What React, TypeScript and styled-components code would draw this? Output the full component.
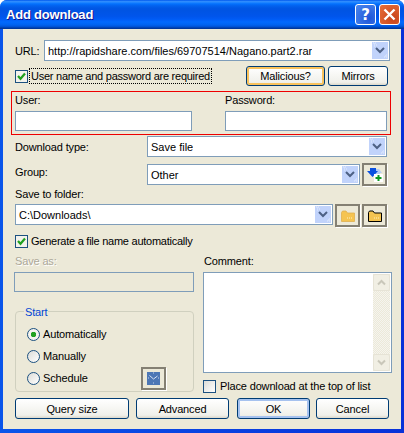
import styled, { createGlobalStyle } from 'styled-components';

const GlobalStyle = createGlobalStyle`
  html, body { margin: 0; padding: 0; background: #fff; }
  * { box-sizing: border-box; }
`;

function Chevron() {
  return (
    <svg width="16" height="17" viewBox="0 0 16 17">
      <path d="M4 6 L8 10 L12 6" fill="none" stroke="#4d6185" strokeWidth="2" />
      <path d="M1 1h1M3 1h1M2 2h1M2 4h1M4 3h1M14 13h1M12 15h1M14 15h1M13 14h1" stroke="#e6eefc" strokeWidth="1" />
    </svg>
  );
}

function Combo({ width, value }: { width: number; value: string }) {
  return (
    <ComboBox $width={width}>
      <ComboText>{value}</ComboText>
      <ComboArrow><Chevron /></ComboArrow>
    </ComboBox>
  );
}

function Check({ checked }: { checked?: boolean }) {
  return (
    <CheckBox $checked={checked}>
      {checked && (
        <svg width="9" height="9" viewBox="0 0 9 9">
          <path d="M1 4 L3.5 6.8 L8 1.5" fill="none" stroke="#21a121" strokeWidth="2.2" />
        </svg>
      )}
    </CheckBox>
  );
}

function FolderIcon({ outlined }: { outlined?: boolean }) {
  return (
    <svg width="14" height="12" viewBox="0 0 14 12">
      <path
        d="M.5 2.5 L1.5 1 H5 L6.5 3 H13.5 V11.5 H.5 Z"
        fill="#f5c451"
        stroke={outlined ? '#000' : '#e0b050'}
        strokeWidth={outlined ? 1 : 0.8}
      />
      <path d="M6 8h1M8 8h1M10 8h1" stroke="#fff2c0" strokeWidth="1" />
    </svg>
  );
}

function AddIcon() {
  return (
    <svg width="16" height="14" viewBox="0 0 16 14">
      <path d="M6 1 H12 L15 5 H13 V8 H6 Z" fill="#b6cdf5" />
      <path d="M0 3 H3 V0 H9 V3 H11 L5.5 9 Z" fill="#0a50e0" />
      <rect x="7" y="6" width="9" height="8" fill="#fff" />
      <path d="M11.5 7 V13 M8.5 10 H14.5" stroke="#0e9a22" strokeWidth="2" />
    </svg>
  );
}

function ClockIcon() {
  return (
    <svg width="13" height="13" viewBox="0 0 13 13">
      <rect width="13" height="13" fill="#4d77b5" />
      <path d="M2.5 3.5 L6.5 7 L10.5 4" fill="none" stroke="#d8e2f2" strokeWidth="1" />
      <path d="M6 1h1M6 11h1M1 6h1M11 6h1" stroke="#c4d4ec" strokeWidth="1" />
    </svg>
  );
}

function ScrollArrow({ up }: { up?: boolean }) {
  return (
    <ScrollButton>
      <svg width="9" height="7" viewBox="0 0 9 7">
        <path d={up ? 'M1 5.5 L4.5 2 L8 5.5' : 'M1 1.5 L4.5 5 L8 1.5'} fill="none" stroke="#c9c7ba" strokeWidth="2" />
      </svg>
    </ScrollButton>
  );
}

function App() {
  return (
    <>
      <GlobalStyle />
      <Window>
        <TitleBar>
          <TitleText>Add download</TitleText>
          <TitleButtons>
            <HelpButton>?</HelpButton>
            <CloseButton>
              <svg width="13" height="13" viewBox="0 0 13 13">
                <path d="M1.5 1.5 L11.5 11.5 M11.5 1.5 L1.5 11.5" stroke="#fff" strokeWidth="2.4" />
              </svg>
            </CloseButton>
          </TitleButtons>
        </TitleBar>
        <Body>
          <UrlRow>
            <UrlLabel>URL:</UrlLabel>
            <Combo width={346} value="http://rapidshare.com/files/69707514/Nagano.part2.rar" />
          </UrlRow>

          <AuthRow>
            <Check checked />
            <FocusLabel>User name and password are required</FocusLabel>
            <AuthButtons>
              <PushButton $width={79} $glow="hover">Malicious?</PushButton>
              <PushButton $width={60}>Mirrors</PushButton>
            </AuthButtons>
          </AuthRow>

          <CredentialsBox>
            <CredentialField $width={210}>
              <Label>User:</Label>
              <TextInput $width={177} />
            </CredentialField>
            <CredentialField $width={162}>
              <Label>Password:</Label>
              <TextInput $width={162} />
            </CredentialField>
          </CredentialsBox>

          <OptionRow $top={1}>
            <OptionLabel>Download type:</OptionLabel>
            <Combo width={240} value="Save file" />
          </OptionRow>

          <OptionRow $top={7}>
            <OptionLabel $raised>Group:</OptionLabel>
            <Combo width={213} value="Other" />
            <IconButton $left={2}><AddIcon /></IconButton>
          </OptionRow>

          <SectionLabel>Save to folder:</SectionLabel>
          <FolderRow>
            <Combo width={318} value="C:\Downloads\" />
            <IconButton><FolderIcon /></IconButton>
            <IconButton><FolderIcon outlined /></IconButton>
          </FolderRow>

          <GenerateRow>
            <Check checked />
            <TightLabel>Generate a file name automatically</TightLabel>
          </GenerateRow>

          <LowerGrid>
            <LeftColumn>
              <DisabledLabel>Save as:</DisabledLabel>
              <DisabledInput />
              <StartGroup>
                <Legend>Start</Legend>
                <RadioRow>
                  <Radio $on />
                  <Label>Automatically</Label>
                </RadioRow>
                <RadioRow>
                  <Radio />
                  <Label>Manually</Label>
                </RadioRow>
                <RadioRow>
                  <Radio />
                  <Label>Schedule</Label>
                  <ScheduleButton><ClockIcon /></ScheduleButton>
                </RadioRow>
              </StartGroup>
            </LeftColumn>
            <RightColumn>
              <CommentLabel>Comment:</CommentLabel>
              <CommentBox>
                <Scrollbar>
                  <ScrollArrow up />
                  <ScrollArrow />
                </Scrollbar>
              </CommentBox>
              <PlaceRow>
                <Check />
                <Label>Place download at the top of list</Label>
              </PlaceRow>
            </RightColumn>
          </LowerGrid>

          <FooterRow>
            <PushButton $width={114}>Query size</PushButton>
            <PushButton $width={93} $left={7}>Advanced</PushButton>
            <PushButton $width={73} $left={8} $glow="default">OK</PushButton>
            <PushButton $width={73} $left={6}>Cancel</PushButton>
          </FooterRow>
        </Body>
      </Window>
    </>
  );
}

export default App;

const Window = styled.div`
  width: 404px;
  height: 433px;
  display: flex;
  flex-direction: column;
  background: linear-gradient(90deg, #0a55ea, #0831d9);
  border-radius: 7px 7px 0 0;
  overflow: hidden;
  font-family: "Liberation Sans", Arial, sans-serif;
  font-size: 11px;
  letter-spacing: -0.15px;
  color: #000;
`;

const TitleBar = styled.div`
  height: 29px;
  flex: none;
  display: flex;
  align-items: center;
  justify-content: space-between;
  padding: 0 4px 0 6px;
  background: linear-gradient(180deg, #0058ee 0%, #3593ff 6%, #127dff 10%, #036ffc 14%, #0262ee 20%, #0057e5 28%, #0054e3 36%, #0055eb 56%, #005bf5 66%, #026afe 76%, #0062ef 86%, #0052d6 92%, #0040ab 96%, #003092 100%);
`;

const TitleText = styled.div`
  font-weight: bold;
  font-size: 13px;
  letter-spacing: -0.2px;
  color: #fff;
  text-shadow: 1px 1px 0 #0f1089;
`;

const TitleButtons = styled.div`
  display: flex;
  gap: 3px;
`;

const HelpButton = styled.div`
  width: 21px;
  height: 21px;
  display: flex;
  align-items: center;
  justify-content: center;
  border: 1px solid #fff;
  border-radius: 3px;
  background: radial-gradient(circle at 70% 70%, #1f55d8, #4b88ee);
  color: #fff;
  font-family: "DejaVu Sans", sans-serif;
  font-size: 15px;
  font-weight: bold;
`;

const CloseButton = styled(HelpButton)`
  background: radial-gradient(circle at 70% 70%, #c8431a, #e8703a);
`;

const Body = styled.div`
  flex: none;
  width: 398px;
  height: 400px;
  margin-left: 3px;
  padding: 11px 0 0 12px;
  background: #ece9d8;
`;

const Label = styled.span`
  white-space: nowrap;
`;

const TightLabel = styled(Label)`
  letter-spacing: -0.25px;
`;

const UrlRow = styled.div`
  display: flex;
  align-items: center;
  height: 21px;
`;

const UrlLabel = styled.span`
  width: 29px;
  flex: none;
`;

const ComboBox = styled.div<{ $width: number }>`
  width: ${(p) => p.$width}px;
  height: 21px;
  flex: none;
  display: flex;
  align-items: center;
  justify-content: space-between;
  padding: 1px;
  background: #fff;
  border: 1px solid #7f9db9;
`;

const ComboText = styled.span`
  padding-left: 2px;
  white-space: nowrap;
  overflow: hidden;
  letter-spacing: 0;
`;

const ComboArrow = styled.div`
  width: 16px;
  height: 17px;
  flex: none;
  display: flex;
  background: #c1d3fb;
`;

const AuthRow = styled.div`
  display: flex;
  align-items: center;
  height: 20px;
  margin-top: 5px;
`;

const CheckBox = styled.div<{ $checked?: boolean }>`
  width: 13px;
  height: 13px;
  flex: none;
  display: flex;
  align-items: center;
  justify-content: center;
  border: 1px solid #1c5180;
  background: ${(p) => (p.$checked ? '#f3f2ec' : 'linear-gradient(135deg, #dcdcd7, #fff)')};
`;

const FocusLabel = styled.span`
  margin-left: 2px;
  padding: 0 1px;
  line-height: 14px;
  outline: 1px dotted #000;
  white-space: nowrap;
  letter-spacing: -0.25px;
`;

const AuthButtons = styled.div`
  display: flex;
  gap: 3px;
  margin-left: auto;
  margin-right: 13px;
`;

const PushButton = styled.div<{ $width: number; $left?: number; $glow?: 'hover' | 'default' }>`
  width: ${(p) => p.$width}px;
  height: 20px;
  flex: none;
  margin-left: ${(p) => p.$left ?? 0}px;
  display: flex;
  align-items: center;
  justify-content: center;
  border: 1px solid #003c74;
  border-radius: 3px;
  background: linear-gradient(180deg, #fff, #f0f0ea 85%, #dcd8ca);
  box-shadow: ${(p) =>
    p.$glow === 'hover'
      ? 'inset 0 0 0 2px #f9c25c'
      : p.$glow === 'default'
        ? 'inset 0 0 0 2px #a6c2ef'
        : 'none'};
`;

const CredentialsBox = styled.div`
  width: 380px;
  height: 44px;
  margin: 5px 0 0 -4px;
  padding: 1px 3px 0;
  display: flex;
  justify-content: space-between;
  border: 1px solid #ee0000;
`;

const CredentialField = styled.div<{ $width: number }>`
  width: ${(p) => p.$width}px;
  display: flex;
  flex-direction: column;
  gap: 4px;
  line-height: 14px;
`;

const TextInput = styled.div<{ $width: number }>`
  width: ${(p) => p.$width}px;
  height: 20px;
  background: #fff;
  border: 1px solid #7f9db9;
`;

const OptionRow = styled.div<{ $top: number }>`
  display: flex;
  align-items: center;
  height: 21px;
  margin-top: ${(p) => p.$top}px;
`;

const OptionLabel = styled.span<{ $raised?: boolean }>`
  width: 132px;
  flex: none;
  padding-bottom: ${(p) => (p.$raised ? 5 : 0)}px;
`;

const IconButton = styled.div<{ $left?: number }>`
  width: 25px;
  height: 23px;
  flex: none;
  margin-left: ${(p) => p.$left ?? 0}px;
  display: flex;
  align-items: center;
  justify-content: center;
  background: #ece9d8;
  border: 2px solid #848073;
  box-shadow: 1px 1px 0 #fff;
`;

const SectionLabel = styled.div`
  height: 14px;
  line-height: 14px;
  margin-top: 2px;
`;

const FolderRow = styled.div`
  display: flex;
  align-items: flex-start;
  gap: 2px;
  height: 23px;
  margin-top: 3px;
`;

const GenerateRow = styled.div`
  display: flex;
  align-items: center;
  gap: 3px;
  height: 14px;
  margin-top: 7px;
`;

const LowerGrid = styled.div`
  display: grid;
  grid-template-columns: 180px 189px;
  column-gap: 9px;
  margin-top: 6px;
  margin-left: -1px;
`;

const LeftColumn = styled.div`
  display: flex;
  flex-direction: column;
`;

const RightColumn = styled.div`
  display: flex;
  flex-direction: column;
`;

const DisabledLabel = styled.div`
  height: 14px;
  line-height: 14px;
  padding-left: 1px;
  color: #aca899;
  text-shadow: 1px 1px 0 #fff;
`;

const DisabledInput = styled.div`
  width: 180px;
  height: 20px;
  margin-top: 4px;
  background: #ece9d8;
  border: 1px solid #7f9db9;
`;

const StartGroup = styled.div`
  position: relative;
  width: 179px;
  height: 81px;
  margin: 19px 0 0 1px;
  padding-top: 11px;
  border: 1px solid #d0d0bf;
  border-radius: 4px;
`;

const Legend = styled.span`
  position: absolute;
  top: -7px;
  left: 8px;
  padding: 0 1px;
  line-height: 14px;
  color: #0046d5;
  background: #ece9d8;
`;

const RadioRow = styled.div`
  display: flex;
  align-items: center;
  gap: 3px;
  height: 22px;
  padding-left: 11px;
`;

const Radio = styled.div<{ $on?: boolean }>`
  width: 13px;
  height: 13px;
  flex: none;
  border: 1px solid #1c5180;
  border-radius: 50%;
  background: ${(p) =>
    p.$on
      ? 'radial-gradient(circle, #21a121 0 2.5px, #f4f3ee 3px)'
      : 'linear-gradient(135deg, #dcdcd7, #fff)'};
`;

const ScheduleButton = styled(IconButton)`
  margin-left: auto;
  margin-right: 27px;
`;

const CommentLabel = styled.div`
  height: 14px;
  line-height: 14px;
  padding-left: 1px;
`;

const CommentBox = styled.div`
  height: 101px;
  margin-top: 4px;
  display: flex;
  justify-content: flex-end;
  padding: 1px;
  background: #fff;
  border: 1px solid #7f9db9;
`;

const Scrollbar = styled.div`
  width: 17px;
  display: flex;
  flex-direction: column;
  justify-content: space-between;
  background: repeating-conic-gradient(#f5f4ef 0 25%, #ece9d8 0 50%) 0 0 / 2px 2px;
`;

const ScrollButton = styled.div`
  height: 17px;
  display: flex;
  align-items: center;
  justify-content: center;
  background: #f1efe4;
  border: 1px solid #e6e3d6;
  border-radius: 2px;
`;

const PlaceRow = styled.div`
  display: flex;
  align-items: center;
  gap: 4px;
  height: 14px;
  margin-top: 6px;
`;

const FooterRow = styled.div`
  display: flex;
  height: 21px;
  margin-top: 5px;

  & > div {
    height: 21px;
  }
`;
